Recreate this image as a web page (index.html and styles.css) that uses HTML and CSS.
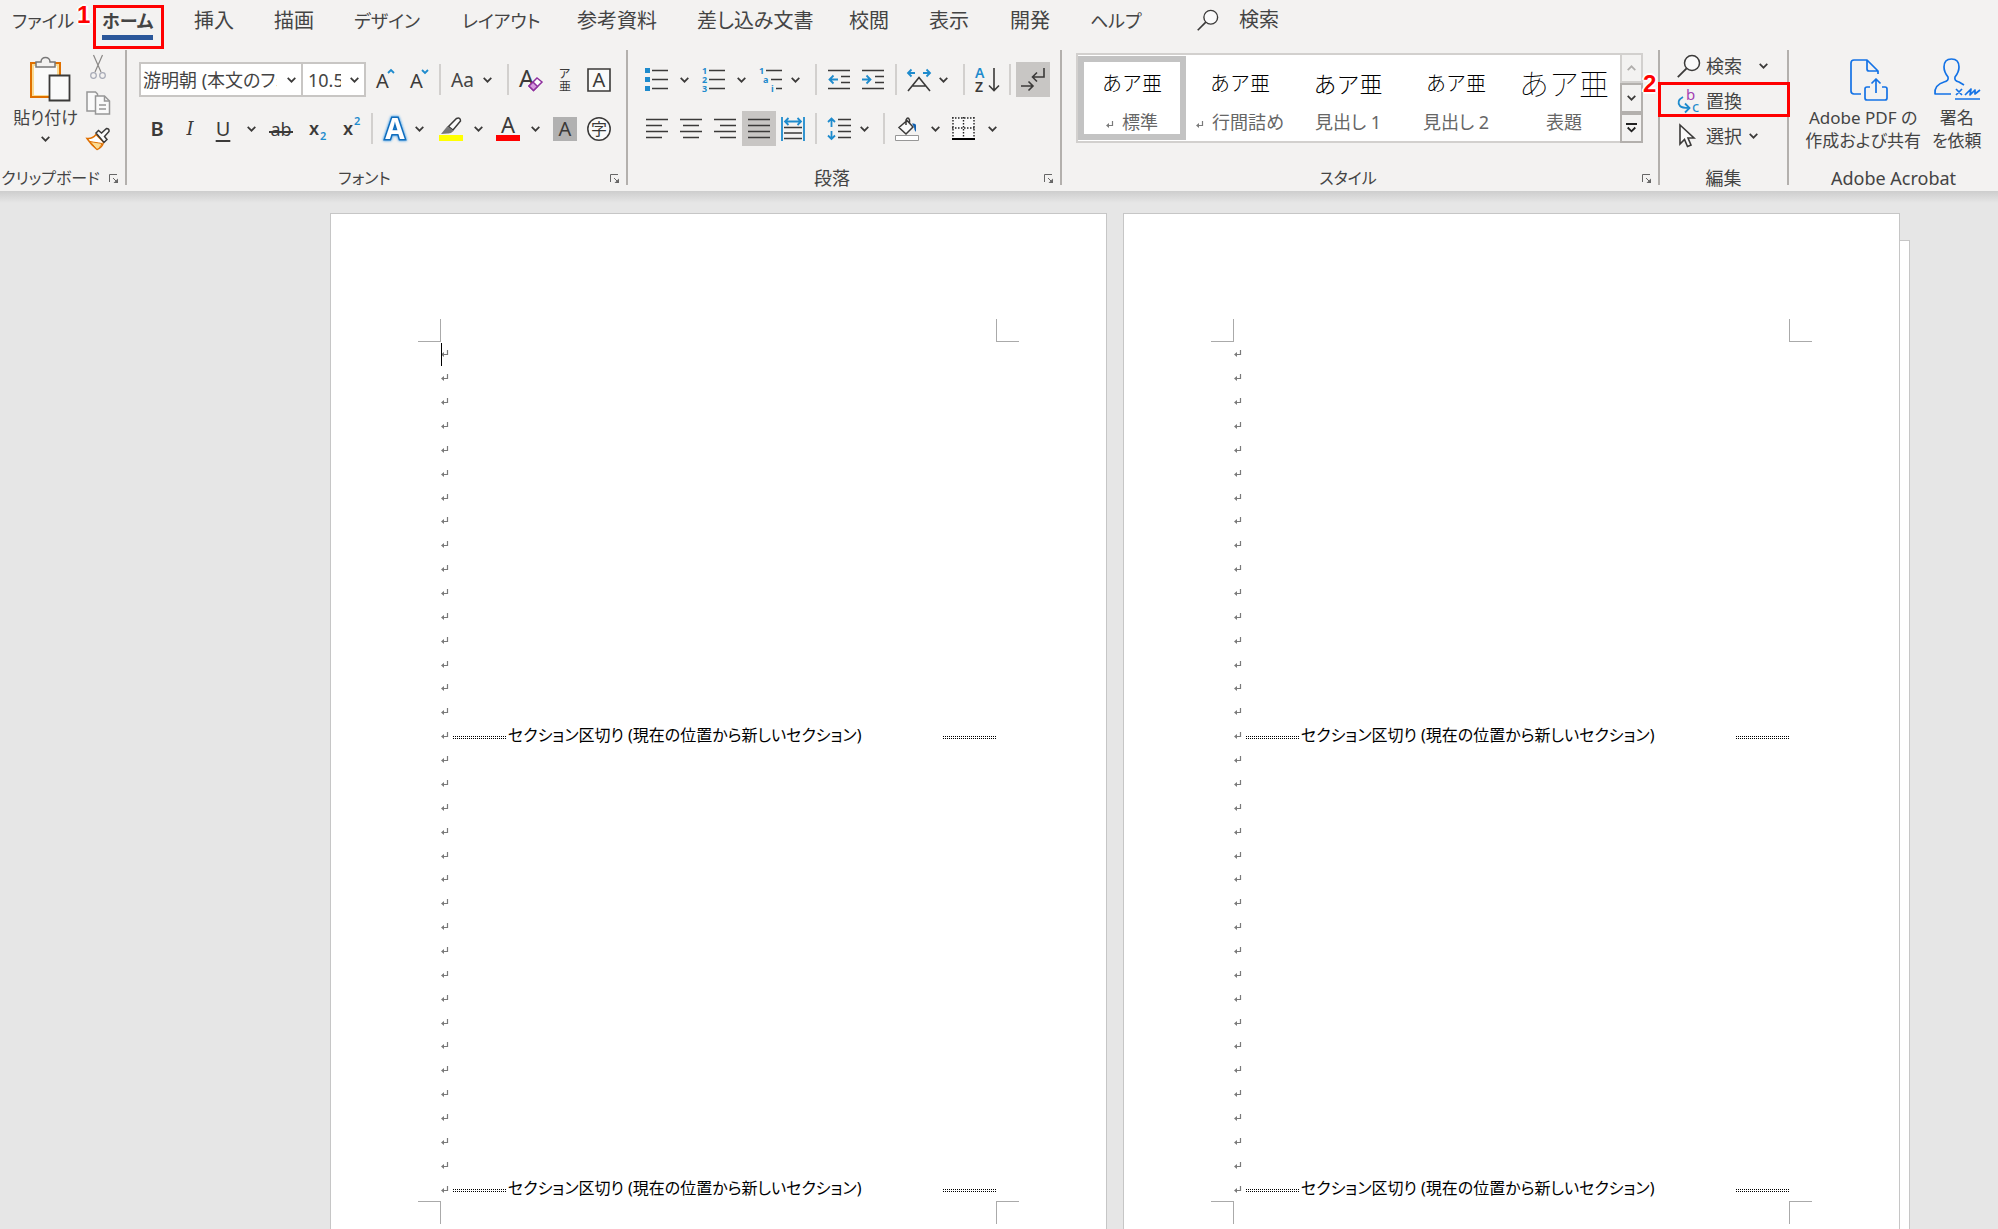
FILE: index.html
```html
<!DOCTYPE html>
<html lang="ja">
<head>
<meta charset="utf-8">
<title>文書</title>
<link rel="stylesheet" href="styles.css">
</head>
<body>
<svg class="defs" aria-hidden="true">
  <symbol id="chev" viewBox="0 0 9 6"><path d="M.7.9 4.5 4.7 8.300.9" fill="none" stroke="#3b3a39" stroke-width="1.7"/></symbol>
  <symbol id="launch" viewBox="0 0 9 9"><path d="M.5 8V.5H8M4 4l3.500 3.500" fill="none" stroke="#666"/><path d="M9 4.500V9H4.500z" fill="#666"/></symbol>
  <symbol id="lens" viewBox="0 0 24 24"><circle cx="15" cy="9" r="7.500" fill="#fafafa" stroke="#3b3a39" stroke-width="1.500"/><path d="M9.600 14.400.8 23.200" stroke="#3b3a39" stroke-width="1.800"/></symbol>
  <symbol id="ret" viewBox="0 0 8 8"><path d="M6.500 0v4.500H1" fill="none" stroke="#7a7a7a" stroke-width="1.200"/><path d="M0 4.500 3 2v5z" fill="#7a7a7a"/></symbol>
</svg>

<header class="ribbon">
  <nav class="tabs">
    <a href="#" class="kana">ファイル</a>
    <a href="#" class="kana current">ホーム</a>
    <a href="#">挿入</a>
    <a href="#">描画</a>
    <a href="#" class="kana">デザイン</a>
    <a href="#" class="kana">レイアウト</a>
    <a href="#">参考資料</a>
    <a href="#">差し込み文書</a>
    <a href="#">校閲</a>
    <a href="#">表示</a>
    <a href="#">開発</a>
    <a href="#" class="kana">ヘルプ</a>
    <a href="#" class="tell"><svg class="i22"><use href="#lens"/></svg>検索</a>
    <span class="callout callout-1">1</span>
    <span class="mark mark-1"></span>
  </nav>

  <div class="groups">
    <section class="group">
      <div class="clip">
        <button class="big">
          <svg class="paste" viewBox="0 0 42 46"><path d="M2 7h29v34H2z" fill="#fadb93" stroke="#e07000" stroke-width="2"/><path d="M5 10h23v29H5z" fill="#fafafa"/><path d="M7 11V6h5c0-6 9-6 9 0h5v5z" fill="#f3f2f1" stroke="#777" stroke-width="1.500"/><path d="M20.500 19.500h20v25h-20z" fill="#fafafa" stroke="#3b3a39" stroke-width="1.800"/></svg>
          <span>貼り付け</span>
          <svg class="chev"><use href="#chev"/></svg>
        </button>
        <div class="clip-side">
          <button aria-label="切り取り"><svg class="i24" viewBox="0 0 24 24"><g fill="none" stroke="#8a8886" stroke-width="1.200"><path d="M7.500 0 15 17M16.500 0 9 17"/><circle cx="7.500" cy="20.500" r="2.800" stroke="#a6a9b5"/><circle cx="16.500" cy="20.500" r="2.800" stroke="#a6a9b5"/></g></svg></button>
          <button aria-label="コピー"><svg class="i24" viewBox="0 0 24 24"><g fill="#fafafa" stroke="#979797" stroke-width="1.500"><path d="M1 1h8.500l2 2v17H1z"/><path d="M9.500 5h9l5 5v13h-14z"/><path d="M18.500 5v5h5M13 14h7M13 18h7" fill="none"/></g></svg></button>
          <button aria-label="書式のコピー"><svg class="i24" viewBox="0 0 24 24"><path d="M1 11.500c4 .5 7-1.500 9-4l7.500 7.500C17 18 15 21 11 22.500 8 20 4 16 1 11.500z" fill="#fff" stroke="#e07000" stroke-width="1.500"/><path d="M4 14.500c5 1 7 1 12 2-1.500 3-3 5-5 6z" fill="#fadb93" stroke="#e07000"/><path d="m10 6 2.500-2.500 3 2.500L20.500 1.500q3 0 2.500 3L18.500 9.500l2.500 3-3 3z" fill="#fafafa" stroke="#3b3a39" stroke-width="1.500"/></svg></button>
        </div>
      </div>
      <footer><span class="kana">クリップボード</span><button class="launch" aria-label="クリップボードの設定"><svg><use href="#launch"/></svg></button></footer>
    </section>

    <section class="group font">
      <div class="row font-1">
        <label class="combo"><select aria-label="フォント"><option>游明朝 (本文のフォント - 日本語)</option></select><svg class="chev"><use href="#chev"/></svg></label>
        <label class="combo size"><select aria-label="フォント サイズ"><option>10.5</option></select><svg class="chev"><use href="#chev"/></svg></label>
        <button aria-label="拡大"><svg class="i24" viewBox="0 0 24 24"><text x="0" y="20" font-size="20">A</text><path d="m12 5 3-3 3 3" class="b"/></svg></button>
        <button aria-label="縮小"><svg class="i24" viewBox="0 0 24 24"><text x="0" y="20" font-size="20">A</text><path d="m12 2 3 3 3-3" class="b"/></svg></button>
        <i class="sep"></i>
        <button class="aa">Aa</button>
        <button aria-label="文字種"><svg class="chev"><use href="#chev"/></svg></button>
        <i class="sep"></i>
        <button aria-label="書式のクリア"><svg class="i24" viewBox="0 0 24 24"><text x="0" y="19" font-size="24">A</text><path d="m10 18 8-8 5 4-8.500 8.500z" fill="#fff" stroke="#8f309f" stroke-width="1.500"/><path d="m10 18 4-4 4.500 4.500-4 4z" fill="#d59add" stroke="#8f309f" stroke-width="1.500"/></svg></button>
        <button aria-label="ルビ"><svg class="i24" viewBox="0 0 24 24"><text x="6" y="10" font-size="12">ア</text><text x="6" y="23" font-size="12">亜</text></svg></button>
        <button aria-label="囲み線"><svg class="i24" viewBox="0 0 24 24"><path d="M1 1h22v22H1z" fill="#fafafa" stroke="#3b3a39" stroke-width="1.600"/><text x="12" y="19" font-size="20" text-anchor="middle">A</text></svg></button>
      </div>
      <div class="row font-2">
        <button class="glyph"><b>B</b></button>
        <button class="glyph serif"><i>I</i></button>
        <button class="glyph"><u>U</u></button>
        <button aria-label="下線の種類"><svg class="chev"><use href="#chev"/></svg></button>
        <button class="glyph strike">ab</button>
        <button aria-label="下付き"><svg class="i24" viewBox="0 0 24 24"><text x="3" y="18" font-size="18" font-weight="600">x</text><text x="14" y="23" font-size="11" font-weight="600" class="bt">2</text></svg></button>
        <button aria-label="上付き"><svg class="i24" viewBox="0 0 24 24"><text x="3" y="18" font-size="18" font-weight="600">x</text><text x="14" y="8" font-size="11" font-weight="600" class="bt">2</text></svg></button>
        <i class="sep"></i>
        <button aria-label="文字の効果"><svg class="i24 glow" viewBox="0 0 24 24"><text x="12" y="22" font-size="28" font-weight="700" text-anchor="middle">A</text></svg></button>
        <button aria-label="効果の種類"><svg class="chev"><use href="#chev"/></svg></button>
        <button aria-label="蛍光ペン"><svg class="i24" viewBox="0 0 24 24"><path d="M0 18h24v6H0z" fill="#ff0"/><path d="m9.500 9.500 8-8q4-1.500 4 2.500L14 13z" fill="#fafafa" stroke="#3b3a39" stroke-width="1.500"/><path d="m8.500 9 6 5q-3 3-6 2.500L2 17z" fill="#777"/></svg></button>
        <button aria-label="蛍光ペンの色"><svg class="chev"><use href="#chev"/></svg></button>
        <button aria-label="フォントの色"><svg class="i24" viewBox="0 0 24 24"><path d="M0 18h24v6H0z" fill="red"/><text x="12" y="16" font-size="22" text-anchor="middle">A</text></svg></button>
        <button aria-label="色の選択"><svg class="chev"><use href="#chev"/></svg></button>
        <button aria-label="網かけ"><svg class="i24" viewBox="0 0 24 24"><path d="M0 0h24v24H0z" fill="#b1b1b1"/><text x="12" y="19" font-size="20" text-anchor="middle">A</text></svg></button>
        <button aria-label="囲い文字"><svg class="i24" viewBox="0 0 24 24"><circle cx="12" cy="12" r="11.200" fill="#fafafa" stroke="#3b3a39" stroke-width="1.500"/><text x="12" y="18" font-size="16" text-anchor="middle">字</text></svg></button>
      </div>
      <footer><span class="kana">フォント</span><button class="launch" aria-label="フォントの設定"><svg><use href="#launch"/></svg></button></footer>
    </section>

    <section class="group para">
      <div class="row para-1">
        <button aria-label="箇条書き"><svg class="i24" viewBox="0 0 24 24"><path d="M0 0h5v5H0zM0 9h5v5H0zM0 18h5v5H0z" fill="#1e8bcd"/><path d="M7 2.500h16M7 11.500h16M7 20.500h16" class="k"/></svg></button>
        <button aria-label="行頭文字"><svg class="chev"><use href="#chev"/></svg></button>
        <button aria-label="段落番号"><svg class="i24" viewBox="0 0 24 24"><g font-size="9" font-weight="bold" class="bt"><text x="0" y="6">1</text><text x="0" y="15">2</text><text x="0" y="24">3</text></g><path d="M7 2.500h16M7 11.500h16M7 20.500h16" class="k"/></svg></button>
        <button aria-label="番号の種類"><svg class="chev"><use href="#chev"/></svg></button>
        <button aria-label="アウトライン"><svg class="i24" viewBox="0 0 24 24"><g font-size="9" font-weight="bold" class="bt"><text x="0" y="6">1</text><text x="4" y="15">a</text><text x="12" y="24">i</text></g><path d="M7 2.500h16M12 11.500h11M17 20.500h6" class="k"/></svg></button>
        <button aria-label="リストの種類"><svg class="chev"><use href="#chev"/></svg></button>
        <i class="sep"></i>
        <button aria-label="インデントを減らす"><svg class="i24" viewBox="0 0 24 24"><path d="M0 2.500h22M13 8.500h9M13 14.500h9M0 20.500h22" class="k"/><path d="M10 11.500H1.500M5.500 7.500l-4 4 4 4" class="b"/></svg></button>
        <button aria-label="インデントを増やす"><svg class="i24" viewBox="0 0 24 24"><path d="M0 2.500h22M13 8.500h9M13 14.500h9M0 20.500h22" class="k"/><path d="M0 11.500h8.500M4.500 7.500l4 4-4 4" class="b"/></svg></button>
        <i class="sep"></i>
        <button aria-label="拡張書式"><svg class="i24" viewBox="0 0 24 24"><path d="M8 5H1M4.500 1.500 1 5l3.500 3.500M16 5h7M19.500 1.500 23 5l-3.500 3.500" class="b"/><path d="M1 23 12 9.500 23 23M5.500 18h13" class="k"/></svg></button>
        <button aria-label="書式の種類"><svg class="chev"><use href="#chev"/></svg></button>
        <i class="sep"></i>
        <button aria-label="並べ替え"><svg class="i24" viewBox="0 0 24 24"><g font-size="14" font-weight="600"><text x="0" y="10" class="bt">A</text><text x="0" y="24">Z</text></g><path d="M19 0v22M14 17.500l5 5 5-5" class="k"/></svg></button>
        <i class="sep"></i>
        <button class="on" aria-label="編集記号の表示"><svg class="i24" viewBox="0 0 24 24"><path d="M23 0v9H11.500M16 4.500 11.500 9l4.500 4.500M0 18h12M7.500 13.500 12 18l-4.500 4.500" class="k"/></svg></button>
      </div>
      <div class="row para-2">
        <button aria-label="左揃え"><svg class="i24" viewBox="0 0 24 24"><path d="M1 2.500h22M1 8.500h16M1 14.500h22M1 20.500h16" class="k"/></svg></button>
        <button aria-label="中央揃え"><svg class="i24" viewBox="0 0 24 24"><path d="M1 2.500h22M4 8.500h16M1 14.500h22M4 20.500h16" class="k"/></svg></button>
        <button aria-label="右揃え"><svg class="i24" viewBox="0 0 24 24"><path d="M1 2.500h22M7 8.500h16M1 14.500h22M7 20.500h16" class="k"/></svg></button>
        <button class="on" aria-label="両端揃え"><svg class="i24" viewBox="0 0 24 24"><path d="M1 2.500h22M1 8.500h22M1 14.500h22M1 20.500h22" class="k"/></svg></button>
        <button aria-label="均等割り付け"><svg class="i24" viewBox="0 0 24 24"><path d="M1 0v24M23 0v24M4 4.500h16M7.500 1 4 4.500 7.500 8M16.500 1 20 4.500 16.500 8" class="b"/><path d="M3 10.500h18M3 16h18M3 21.500h18" class="k"/></svg></button>
        <i class="sep"></i>
        <button aria-label="行間"><svg class="i24" viewBox="0 0 24 24"><path d="M4.500 2v8M1 5l3.500-3.500L8 5M4.500 14v7M1 18.500 4.500 22 8 18.500" class="b"/><path d="M11 2.500h13M11 8.500h13M11 14.500h13M11 20.500h13" class="k"/></svg></button>
        <button aria-label="行間の選択"><svg class="chev"><use href="#chev"/></svg></button>
        <i class="sep"></i>
        <button aria-label="塗りつぶし"><svg class="i24" viewBox="0 0 24 24"><path d="M.5 18.500h23v5H.5z" fill="#fff" stroke="#979797"/><path d="m4 10.500 8-7 6 6.500-7 7zM11 8V3q2-4 3.500 0v4" fill="#fafafa" stroke="#3b3a39" stroke-width="1.500"/><path d="M17 6.500q4-.5 4 2V15q-2-2-2-5z" fill="#0f5fb0"/></svg></button>
        <button aria-label="塗りつぶしの色"><svg class="chev"><use href="#chev"/></svg></button>
        <button aria-label="罫線"><svg class="i24" viewBox="0 0 24 24"><path d="M1 1h21v20H1z" fill="#fafafa"/><path d="M0 1h23M0 11h23M1 0v20M11.500 0v20M22 0v20" stroke="#222" stroke-width="1.400" stroke-dasharray="1.500 1.500"/><path d="M0 22h23" stroke="#000" stroke-width="2"/></svg></button>
        <button aria-label="罫線の種類"><svg class="chev"><use href="#chev"/></svg></button>
      </div>
      <footer><span>段落</span><button class="launch" aria-label="段落の設定"><svg><use href="#launch"/></svg></button></footer>
    </section>

    <section class="group">
      <div class="gallery">
        <button class="style selected"><span class="sample">あア亜</span><span><svg class="ret"><use href="#ret"/></svg>標準</span></button>
        <button class="style"><span class="sample">あア亜</span><span><svg class="ret"><use href="#ret"/></svg>行間詰め</span></button>
        <button class="style"><span class="sample h1">あア亜</span><span>見出し 1</span></button>
        <button class="style"><span class="sample h2">あア亜</span><span>見出し 2</span></button>
        <button class="style"><span class="sample title">あア亜</span><span>表題</span></button>
        <div class="scroll">
          <button disabled aria-label="前の行"><svg class="chev" viewBox="0 0 9 6"><path d="M.7 5.100 4.500 1.300l3.800 3.800" fill="none" stroke="#b0aeac" stroke-width="1.700"/></svg></button>
          <button aria-label="次の行"><svg class="chev"><use href="#chev"/></svg></button>
          <button aria-label="その他"><svg class="more" viewBox="0 0 11 10"><path d="M0 1h11M1.700 4.500l3.800 3.800 3.800-3.800" fill="none" stroke="#222" stroke-width="1.800"/></svg></button>
        </div>
      </div>
      <footer><span class="kana">スタイル</span><button class="launch" aria-label="スタイルの設定"><svg><use href="#launch"/></svg></button></footer>
    </section>

    <section class="group edit">
      <div class="edit-rows">
        <button class="cmd wide"><svg class="i24"><use href="#lens"/></svg>検索<svg class="chev"><use href="#chev"/></svg></button>
        <button class="cmd"><svg class="i24" viewBox="0 0 24 24"><g font-size="15"><text x="9" y="11" class="pt">b</text><text x="15" y="23" class="bt">c</text></g><path d="M6 8Q-1 12 3 17q2 2 9 2M8 14.500l4.500 4.500L8 23.500" class="b"/></svg>置換</button>
        <button class="cmd"><svg class="i24" viewBox="0 0 24 24"><path d="M3 1v19l4.500-4.500 3 7 3.500-1.500-3-7h6z" fill="#fafafa" stroke="#3b3a39" stroke-width="1.600"/></svg>選択<svg class="chev"><use href="#chev"/></svg></button>
      </div>
      <footer><span>編集</span></footer>
      <span class="callout callout-2">2</span>
      <span class="mark mark-2"></span>
    </section>

    <section class="group last">
      <div class="acro">
        <button class="big"><svg class="adobe pdf" viewBox="0 0 46 46"><g fill="none" stroke="#1473e6" stroke-width="1.700" stroke-linejoin="round"><path d="M16 38H9q-3 0-3-3V7q0-3 3-3h13l11 11v3M22 4v9q0 2 2 2h9"/><path d="M25 31h-3q-2 0-2 2v9q0 2 2 2h18q2 0 2-2v-9q0-2-2-2h-3M31 37V23M26.500 27.500 31 23l4.500 4.500"/></g></svg><span>Adobe PDF の<br>作成および共有</span></button>
        <button class="big"><svg class="adobe" viewBox="0 0 46 46"><g fill="none" stroke="#1473e6" stroke-width="1.700" stroke-linejoin="round"><path d="M17 38H1q-1-9 9-12 5-1 4-5-4-5-4-10 0-8 7.500-8t7.500 8q0 5-4 10-1 4 4 5l5 3"/><path d="m22 33 6 6M28 33l-6 6M31 39l6-6-1 6 5-5 0 4 5-4M21 43h25"/></g></svg><span>署名<br>を依頼</span></button>
      </div>
      <footer><span>Adobe Acrobat</span></footer>
    </section>
  </div>
</header>

<main class="workspace">
  <article class="page"><div class="text"><span class="caret"></span></div></article>
  <article class="page"><div class="text"></div></article>
  <div class="behind"></div>
</main>
<template id="break"><i class="dots"></i><span>セクション区切り (現在の位置から新しいセクション)</span><i class="dots end"></i></template>
<script src="script.js"></script>
</body>
</html>
```
FILE: styles.css
```css
* { box-sizing: border-box; }
body {
  margin: 0;
  height: 100vh;
  display: flex;
  flex-direction: column;
  overflow: hidden;
  background: #e6e6e6;
  color: #444;
  font: 400 18px/24px "Noto Sans", "Noto Sans CJK JP", sans-serif;
  font-feature-settings: "palt";
}
button, select {
  font: inherit;
  font-feature-settings: inherit;
  color: inherit;
  background: none;
  border: 0;
  padding: 0;
  margin: 0;
}
svg { display: block; flex: none; overflow: visible; }
svg text { fill: #3b3a39; }
svg .bt, svg .bt text { fill: #1e8bcd; }
svg .pt { fill: #a33fb3; }
.k { fill: none; stroke: #3b3a39; stroke-width: 1.6; }
.b { fill: none; stroke: #1e8bcd; stroke-width: 1.8; }
.glow { filter: drop-shadow(0 0 1px #5aa9e6) drop-shadow(0 0 1px #93c6ee); }
.glow text { fill: #fff; stroke: #0f6cbd; stroke-width: 3px; paint-order: stroke; }
.defs { position: absolute; width: 0; height: 0; }
.i24 { width: 24px; height: 24px; }
.i22 { width: 22px; height: 22px; }
.chev { width: 9px; height: 6px; }

.ribbon { flex: none; background: #f3f2f1; padding-bottom: 6px; }

.tabs {
  position: relative;
  display: grid;
  grid-template-columns: 90px 92px 80px 80px 108px 115px 120px 152px 80px 81px 80px 107px auto;
  height: 50px;
  padding-left: 12px;
  font-size: 20px;
  line-height: 42px;
  white-space: nowrap;
}
.tabs a { color: inherit; text-decoration: none; justify-self: start; height: 40px; }
.tabs .kana { font-size: 18px; }
.tabs .current { font-weight: 700; border-bottom: 5px solid #2b579a; }
.tabs .tell { display: flex; align-items: center; gap: 20px; }

.callout {
  position: absolute;
  color: red;
  font: 700 24px/24px "Liberation Sans", sans-serif;
  text-shadow: 0 0 2px #fff, 2px 0 #fff, -2px 0 #fff, 0 2px #fff, 0 -2px #fff;
}
.callout-1 { left: 77px; top: 3px; }
.callout-2 { left: -17px; top: 22px; }
.mark { position: absolute; border: 3px solid red; pointer-events: none; }
.mark-1 { left: 93px; top: 5px; width: 71px; height: 44px; }
.mark-2 { left: -2px; right: -3px; top: 32px; height: 35px; }

.groups { display: grid; grid-template-columns: 127px 501px 434px 598px 129px 1fr; height: 135px; }
.group { position: relative; display: flex; flex-direction: column; border-right: 2px solid #b3b0ad; }
.group.last { border-right: 0; }
.group footer { display: flex; margin-top: auto; height: 16px; line-height: 18px; gap: 8px; white-space: nowrap; }
.group footer span { flex: 1; text-align: center; }
.group footer .kana { font-size: 16px; }
.launch { width: 9px; margin-right: 7px; }
.launch svg { width: 9px; height: 9px; margin-top: 2px; }

.clip { display: grid; grid-template-columns: 81px auto; padding-left: 5px; }
.big { display: flex; flex-direction: column; align-items: center; line-height: 23px; white-space: nowrap; }
.clip .big { padding-top: 6px; font-size: 17px; }
.big .paste { width: 42px; height: 46px; margin: 0 0 4px 8px; }
.clip .big .chev { margin-top: 7px; }
.clip-side { display: grid; grid-auto-rows: 24px; row-gap: 12px; padding-top: 5px; justify-content: start; }

.row { display: grid; height: 35px; align-items: center; justify-items: start; }
.font { padding-left: 12px; }
.para { padding-left: 17px; }
.font .row:first-child, .para .row:first-child { margin: 12px 0 14px; }
.font-1 { grid-template-columns: 162px 75px 34px 29px 12px 32px 24px 12px 34px 34px 24px; }
.font-2 { grid-template-columns: 33px 33px 36px 22px 37px 34px 31px 12px 32px 24px 35px 22px 35px 22px 34px 24px; padding-left: 6px; }
.para-1 { grid-template-columns: 35px 22px 35px 22px 32px 24px 13px 34px 33px 12px 32px 24px 12px 34px 7px 34px; }
.para-2 { grid-template-columns: 34px 34px 29px 39px 34px 12px 33px 23px 12px 36px 21px 36px 9px; }
.sep { width: 2px; height: 31px; background: #d2d0ce; }
.on { display: grid; place-items: center; width: 34px; height: 35px; background: #c8c6c4; }
.font footer { margin-left: -12px; }
.para footer { margin-left: -17px; }
.aa { font-size: 19px; }
.glyph { width: 24px; font-size: 20px; line-height: 22px; color: #3b3a39; text-align: center; }
.glyph b { font-weight: 600; }
.glyph u { text-underline-offset: 4px; text-decoration-thickness: 2px; }
.glyph.serif { font-family: "DejaVu Serif", "Liberation Serif", serif; font-size: 18px; }
/* The strike line runs past both letters. */
.glyph.strike { font-size: 18px; background: linear-gradient(#3b3a39, #3b3a39) 0 13px / 100% 2px no-repeat; }

.combo { position: relative; width: 162px; height: 35px; background: #fff; border: 2px solid #c8c6c4; border-right: 0; }
.combo.size { width: 65px; border-right: 2px solid #c8c6c4; }
.combo select { appearance: none; display: block; width: 136px; height: 31px; padding-left: 2px; overflow: hidden; text-overflow: clip; }
.combo.size select { width: 38px; padding-left: 5px; }
.combo .chev { position: absolute; right: 5px; top: 13px; }

.gallery {
  display: grid;
  grid-template-columns: repeat(5, 108px) 1fr;
  width: 567px;
  height: 90px;
  margin: 3px 0 0 14px;
  border: 2px solid #d2d0ce;
  background: #fff;
}
.style { display: flex; flex-direction: column; align-items: center; justify-content: space-between; padding: 9px 0 0; margin: 1px 0; border: 6px solid transparent; border-width: 6px 0; color: #666; white-space: nowrap; }
.style.selected { border: 6px solid #c3c3c3; }
.style span { display: flex; align-items: center; gap: 8px; }
.style .ret { width: 8px; height: 8px; margin-top: 6px; }
.style .sample { height: 26px; font-size: 20px; font-weight: 300; color: #000; font-feature-settings: normal; }
.style .sample.h1 { font-size: 23px; font-weight: 200; }
.style .sample.h2 { font-weight: 200; }
.style .sample.title { font-size: 30px; font-weight: 100; }
.scroll { display: grid; grid-template-rows: repeat(3, 30px); margin: -2px; margin-left: 2px; }
.scroll button { display: grid; place-items: center; background: #f3f2f1; border: 2px solid #b3b0ad; }
.scroll button:disabled { border-color: #d2d0ce; }
.scroll .more { width: 11px; height: 10px; }

.edit-rows { display: grid; grid-auto-rows: 35px; margin-top: -2px; padding-left: 17px; }
.cmd { display: flex; align-items: center; gap: 5px; white-space: nowrap; }
.cmd .chev { margin-left: 2px; }
.cmd.wide .chev { margin-left: 12px; }

.acro { display: flex; justify-content: center; gap: 11px; padding-top: 6px; font-size: 17px; }
.adobe { width: 46px; height: 46px; margin-bottom: 4px; }
.adobe.pdf { margin-left: 10px; }

.workspace {
  flex: 1;
  min-height: 0;
  display: flex;
  align-items: flex-start;
  gap: 16px;
  padding: 22px 0 0 330px;
  overflow: hidden;
  background: linear-gradient(#cdcdcd, #e6e6e6 12px);
}
.page { flex: none; width: 777px; height: 1100px; padding: 105px 87px; background: #fff; border: 1px solid #c6c6c6; }
.behind { width: 11px; height: 1100px; margin: 27px 0 0 -17px; background: #fff; border: 1px solid #c6c6c6; }
/* Crop marks sit in the four corners around the text area. */
.text {
  position: relative;
  height: 905px;
  padding: 23px 23px;
  display: grid;
  grid-auto-rows: 1fr;
  color: #000;
  font-size: 16px;
  background:
    linear-gradient(#aaa, #aaa) 22px 0 / 1px 23px,
    linear-gradient(#aaa, #aaa) 0 22px / 23px 1px,
    linear-gradient(#aaa, #aaa) calc(100% - 22px) 0 / 1px 23px,
    linear-gradient(#aaa, #aaa) 100% 22px / 23px 1px,
    linear-gradient(#aaa, #aaa) 22px 100% / 1px 23px,
    linear-gradient(#aaa, #aaa) 0 calc(100% - 22px) / 23px 1px,
    linear-gradient(#aaa, #aaa) calc(100% - 22px) 100% / 1px 23px,
    linear-gradient(#aaa, #aaa) 100% calc(100% - 22px) / 23px 1px;
  background-repeat: no-repeat;
}
.caret { position: absolute; left: 23px; top: 24px; width: 1px; height: 23px; background: #000; }
.line { display: flex; align-items: center; min-height: 0; white-space: nowrap; }
.line span { margin: 0 0 2px 2px; }
.line .ret { width: 8px; height: 8px; margin-top: 1px; }
.dots {
  width: 53px;
  height: 3px;
  margin: 3px 0 0 4px;
  background:
    linear-gradient(90deg, #000 1px, transparent 1px) 0 0 / 2px 1px repeat-x,
    linear-gradient(90deg, #000 1px, transparent 1px) 0 100% / 2px 1px repeat-x;
}
.dots.end { margin-left: auto; }
```
FILE: script.js
```js
const LINES = 36;
const BREAKS = [16, 35];
const sectionBreak = document.getElementById("break");

document.querySelectorAll(".text").forEach((text) => {
  for (let i = 0; i < LINES; i++) {
    const line = document.createElement("div");
    line.className = "line";
    line.innerHTML = '<svg class="ret"><use href="#ret"/></svg>';
    if (BREAKS.includes(i)) line.append(sectionBreak.content.cloneNode(true));
    text.append(line);
  }
});
```
